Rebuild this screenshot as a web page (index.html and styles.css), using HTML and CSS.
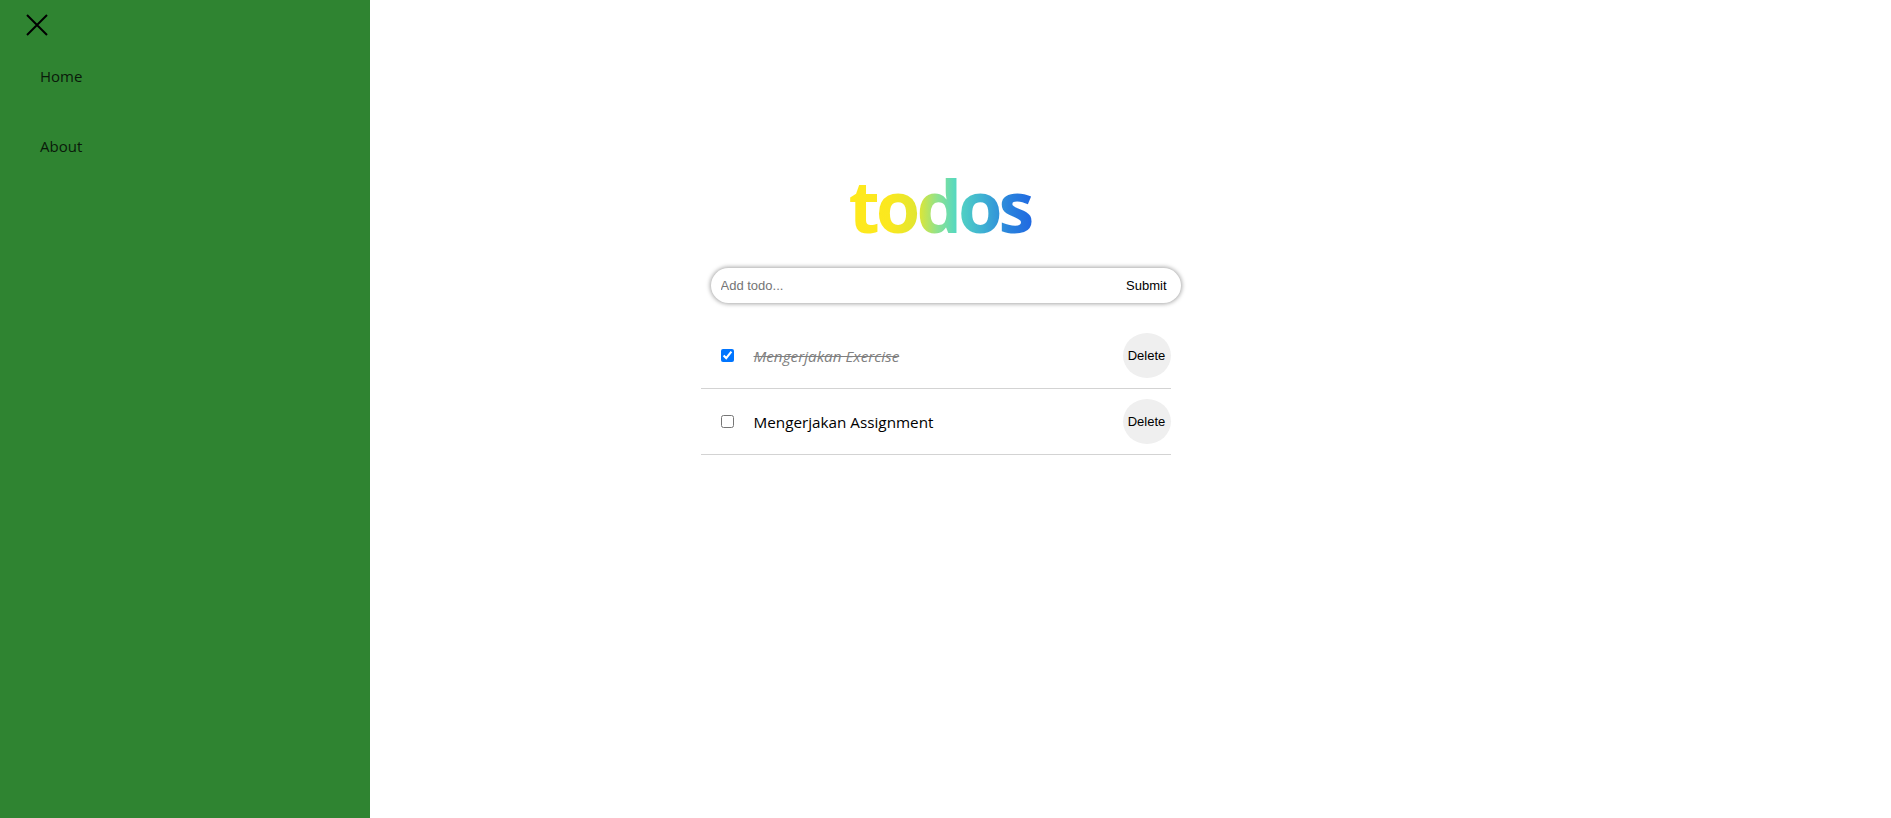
FILE: index.html
```html
<!DOCTYPE html>
<html lang="en">
<head>
<meta charset="utf-8">
<title>todos</title>
<link rel="stylesheet" href="styles.css">
</head>
<body>
<aside class="sidebar">
  <div class="sidebar-head">
    <button class="close-btn" aria-label="Close">
      <svg width="22" height="22" viewBox="0 0 22 22"><path d="M1 1 L21 21 M21 1 L1 21" stroke="#000" stroke-width="2" fill="none"/></svg>
    </button>
  </div>
  <nav class="nav">
    <a class="nav-link" href="#">Home</a>
    <a class="nav-link" href="#">About</a>
  </nav>
</aside>
<main class="app">
  <h1 class="title">todos</h1>
  <form class="add-form">
    <input class="add-input" type="text" placeholder="Add todo...">
    <button class="submit-btn" type="button">Submit</button>
  </form>
  <ul class="todo-list">
    <li class="todo-item">
      <input class="todo-check" type="checkbox" checked>
      <span class="todo-text done">Mengerjakan Exercise</span>
      <button class="delete-btn" type="button">Delete</button>
    </li>
    <li class="todo-item">
      <input class="todo-check" type="checkbox">
      <span class="todo-text">Mengerjakan Assignment</span>
      <button class="delete-btn" type="button">Delete</button>
    </li>
  </ul>
</main>
</body>
</html>
```
FILE: styles.css
```css
* { box-sizing: border-box; }
html, body { margin: 0; padding: 0; }
body {
  background: #fff;
  font-family: "Open Sans", "Noto Sans", sans-serif;
  width: 1891px;
  height: 818px;
  overflow: hidden;
}
.sidebar {
  position: fixed;
  top: 0;
  left: 0;
  width: 370px;
  height: 100%;
  background: #2f8431;
  z-index: 10;
}
.sidebar-head {
  padding: 14px 0 5px 26px;
  height: 41px;
}
.close-btn {
  display: block;
  padding: 0;
  border: 0;
  background: transparent;
  width: 22px;
  height: 22px;
}
.close-btn svg { display: block; }
.nav { display: flex; flex-direction: column; }
.nav-link {
  display: block;
  padding: 24px 0 24px 40px;
  line-height: 22px;
  font-size: 15px;
  color: #0a1a0a;
  text-decoration: none;
}
.app {
  width: 490px;
  margin: 0 auto;
  padding-top: 165px;
}
.title {
  margin: 0;
  font-size: 72px;
  line-height: 80px;
  font-weight: 700;
  text-align: center;
  letter-spacing: -4px;
  background: linear-gradient(to right, #ffe91c 0%, #fbe81f 22%, #e0e632 38%, #8fe28e 48%, #55d8c0 58%, #3fb2d2 72%, #2a84dc 86%, #1f66e2 100%);
  -webkit-background-clip: text;
  background-clip: text;
  color: transparent;
  width: 186px;
  margin-left: 147px;
  padding-right: 2px;
}
.add-form {
  display: flex;
  align-items: center;
  width: 470px;
  height: 35px;
  margin: 23px 0 0 10px;
  border-radius: 18px;
  background: #fff;
  box-shadow: 0 0 4px 1px rgba(0,0,0,0.35);
  overflow: hidden;
}
.add-input {
  flex: 1;
  height: 100%;
  border: 0;
  outline: none;
  padding: 0 0 0 10px;
  font-family: "Liberation Sans", Arial, sans-serif;
  font-size: 13px;
  background: transparent;
}
.add-input::placeholder { color: #757575; }
.submit-btn {
  border: 0;
  background: transparent;
  font-family: "Liberation Sans", Arial, sans-serif;
  font-size: 13px;
  color: #000;
  padding: 0 14px 0 8px;
  height: 100%;
}
.todo-list {
  list-style: none;
  margin: 20px 0 0 0;
  padding: 0;
  width: 470px;
}
.todo-item {
  display: flex;
  align-items: center;
  padding: 10px 0;
  border-bottom: 1px solid #d3d3d3;
}
.todo-check {
  margin: 0 20px 0 20px;
  width: 13px;
  height: 13px;
}
.todo-text {
  font-size: 15.25px;
  color: #000;
}
.todo-text.done {
  font-style: italic;
  color: #808080;
  text-decoration: line-through;
}
.delete-btn {
  margin-left: auto;
  width: 48px;
  height: 45px;
  border: 0;
  border-radius: 50%;
  background: #efefef;
  font-family: "Liberation Sans", Arial, sans-serif;
  font-size: 13px;
  color: #000;
  padding: 0;
}
```
